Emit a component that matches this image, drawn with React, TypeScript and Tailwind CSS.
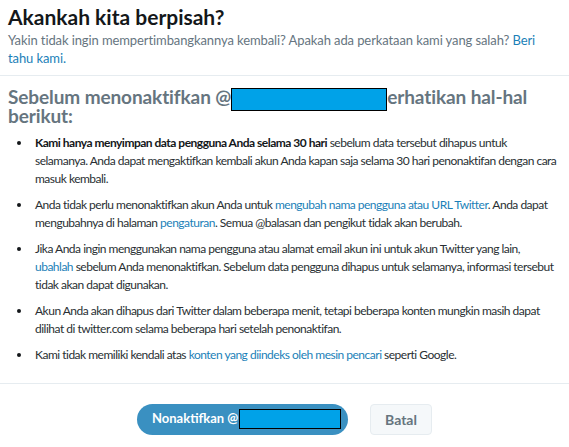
import React from 'react';

const font = { fontFamily: 'Lato, "Noto Sans", sans-serif' };

const Redacted: React.FC<{ className: string }> = ({ className }) => (
  <span className={`inline-block bg-[#00a2e8] border border-black align-middle ${className}`} />
);

const Item: React.FC<{ children: React.ReactNode }> = ({ children }) => (
  <li className="flex mb-[8px]">
    <span className="w-[4px] h-[4px] mt-[7px] ml-[9px] mr-[14px] rounded-full bg-[#14171a] shrink-0" />
    <p className="flex-1">{children}</p>
  </li>
);

const App: React.FC = () => {
  const link = 'text-[#1b7fb8]';

  return (
    <div className="w-[569px] h-[447px] bg-white overflow-hidden" style={font}>
      {/* Header */}
      <div className="px-[8px] pt-[3px] pb-[8px] border-b border-[#e6ecf0]">
        <h1 className="text-[21px] leading-[28px] font-bold text-[#14171a]">
          Akankah kita berpisah?
        </h1>
        <p className="text-[13px] leading-[18px] text-[#66757f] tracking-[-0.1px]">
          Yakin tidak ingin mempertimbangkannya kembali? Apakah ada perkataan kami yang salah?{' '}
          <a className={link}>Beri tahu kami.</a>
        </p>
      </div>

      {/* Body */}
      <div className="px-[8px] pt-[12px] pb-[11px] border-b border-[#e6ecf0]">
        <h2 className="text-[19px] leading-[17px] font-bold text-[#66757f] tracking-[-0.1px]">
          Sebelum menonaktifkan @<Redacted className="w-[156px] h-[23px] -my-[4px]" />erhatikan hal-hal berikut:
        </h2>

        <ul className="mt-[10px] text-[12px] leading-[18px] text-[#292f33] tracking-[-0.5px]">
          <Item>
            <b className="text-[#14171a]">Kami hanya menyimpan data pengguna Anda selama 30 hari</b> sebelum data
            tersebut dihapus untuk selamanya. Anda dapat mengaktifkan kembali akun Anda kapan saja selama 30 hari
            penonaktifan dengan cara masuk kembali.
          </Item>
          <Item>
            Anda tidak perlu menonaktifkan akun Anda untuk{' '}
            <a className={link}>mengubah nama pengguna atau URL Twitter</a>. Anda dapat mengubahnya di halaman{' '}
            <a className={link}>pengaturan</a>. Semua @balasan dan pengikut tidak akan berubah.
          </Item>
          <Item>
            Jika Anda ingin menggunakan nama pengguna atau alamat email akun ini untuk akun Twitter yang lain,
            <br />
            <a className={link}>ubahlah</a> sebelum Anda menonaktifkan. Sebelum data pengguna dihapus untuk
            selamanya, informasi tersebut tidak akan dapat digunakan.
          </Item>
          <Item>
            Akun Anda akan dihapus dari Twitter dalam beberapa menit, tetapi beberapa konten mungkin masih dapat
            dilihat di twitter.com selama beberapa hari setelah penonaktifan.
          </Item>
          <Item>
            Kami tidak memiliki kendali atas <a className={link}>konten yang diindeks oleh mesin pencari</a> seperti
            Google.
          </Item>
        </ul>
      </div>

      {/* Actions */}
      <div className="flex justify-center items-center gap-[22px] pt-[20px]">
        <button className="h-[31px] w-[211px] rounded-full bg-[#3a90c1] text-white text-[13px] font-bold pl-[15px] pr-[4px] flex items-center">
          Nonaktifkan @<Redacted className="w-[102px] h-[20px] ml-[1px]" />
        </button>
        <button className="h-[31px] w-[62px] rounded-[4px] bg-[#f5f8fa] border border-[#e6ecf0] text-[#66757f] text-[14px] font-bold">
          Batal
        </button>
      </div>
    </div>
  );
};

export default App;
